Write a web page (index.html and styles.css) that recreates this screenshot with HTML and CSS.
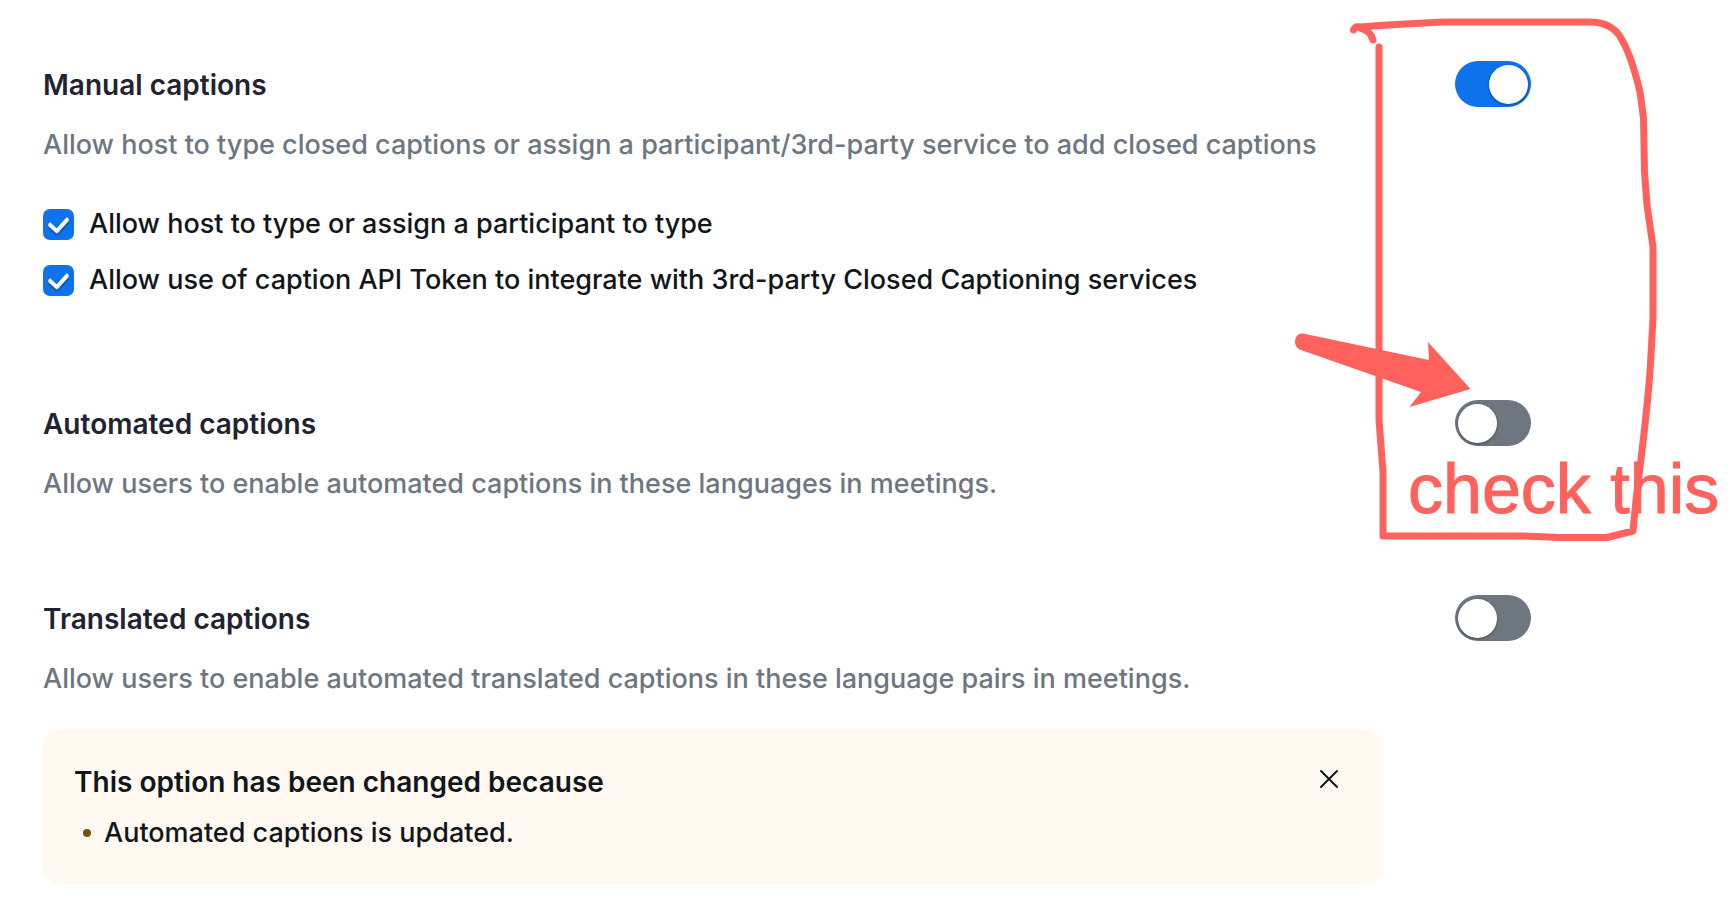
FILE: index.html
```html
<!DOCTYPE html>
<html lang="en">
<head>
<meta charset="utf-8">
<meta name="viewport" content="width=device-width, initial-scale=1">
<title>Caption settings</title>
<link rel="stylesheet" href="styles.css">
</head>
<body>
<main class="settings">
  <section class="setting">
    <div class="setting-body">
      <h2 class="setting-title" id="manual">Manual captions</h2>
      <p class="setting-desc">Allow host to type closed captions or assign a participant/3rd-party service to add closed captions</p>
      <div class="options">
        <label class="option"><input class="checkbox" type="checkbox" checked>Allow host to type or assign a participant to type</label>
        <label class="option"><input class="checkbox" type="checkbox" checked>Allow use of caption API Token to integrate with 3rd-party Closed Captioning services</label>
      </div>
    </div>
    <input class="toggle" type="checkbox" role="switch" aria-labelledby="manual" checked>
  </section>

  <section class="setting">
    <div class="setting-body">
      <h2 class="setting-title" id="automated">Automated captions</h2>
      <p class="setting-desc">Allow users to enable automated captions in these languages in meetings.</p>
    </div>
    <input class="toggle" type="checkbox" role="switch" aria-labelledby="automated">
  </section>

  <section class="setting">
    <div class="setting-body">
      <h2 class="setting-title" id="translated">Translated captions</h2>
      <p class="setting-desc">Allow users to enable automated translated captions in these language pairs in meetings.</p>
      <div class="notice">
        <div class="notice-text">
          <h3 class="notice-title">This option has been changed because</h3>
          <ul class="notice-list">
            <li class="notice-item">Automated captions is updated.</li>
          </ul>
        </div>
        <button class="notice-close" type="button" aria-label="Close">
          <svg class="close-icon" viewBox="0 0 20 20" aria-hidden="true"><path d="M2 2 18 18M18 2 2 18"/></svg>
        </button>
      </div>
    </div>
    <input class="toggle" type="checkbox" role="switch" aria-labelledby="translated">
  </section>

  <svg class="markup" viewBox="1280 0 448 560">
    <path class="markup-line" d="M1353.500 30Q1355 26 1360 27L1387 25L1443 22H1590C1603 22 1613 27 1619 35C1630 51 1636 75 1640 92L1643.500 118L1644.500 172L1647 205L1653 247V318L1651 355C1649 400 1642 450 1636 500L1633 531L1607 537.500H1560L1524 536H1383V472L1379 420V47"/>
    <path class="markup-line" d="M1360 28Q1370 30 1373 40"/>
    <path class="markup-arrow" d="M1303 333.500L1429 360L1428 342L1470.500 389L1409.500 407L1421 392L1301 350C1291 346 1295 332 1303 333.500Z"/>
    <text class="markup-text" x="1408" y="513">check this</text>
  </svg>
</main>
</body>
</html>
```
FILE: styles.css
```css
* {
  box-sizing: border-box;
}

body {
  margin: 0;
  background: #fff;
  color: #131619;
  font-family: Inter, "Liberation Sans", sans-serif;
  font-size: 27px;
  font-weight: 500;
  line-height: 40px;
}

h2, h3, p, ul {
  margin: 0;
  padding: 0;
}

.settings {
  position: relative;
  display: flex;
  flex-direction: column;
  gap: 91px;
  padding: 61px 197px 13px 43px;
}

.setting {
  display: flex;
  align-items: flex-start;
  gap: 73px;
}

.setting:first-child {
  margin-bottom: 9px;
}

.setting-body {
  flex: 1;
  min-width: 0;
}

.setting-title {
  color: #222230;
  font-size: 28px;
  font-weight: 600;
  line-height: 48px;
}

.setting-desc {
  margin-top: 16px;
  color: #6e7680;
}

.options {
  display: flex;
  flex-direction: column;
  gap: 16px;
  margin-top: 39px;
}

.option {
  display: flex;
  align-items: center;
  gap: 15px;
}

.checkbox {
  appearance: none;
  flex: none;
  display: grid;
  place-items: center;
  width: 31px;
  height: 31px;
  margin: 0;
  border-radius: 7px;
  background: #0e72ed;
}

.checkbox:checked::before {
  content: "";
  width: 9px;
  height: 15px;
  margin-bottom: 4px;
  border: solid #fff;
  border-width: 0 4px 4px 0;
  border-radius: 2px;
  filter: drop-shadow(1px 1px 1px rgba(0, 0, 0, 0.4));
  transform: rotate(42deg);
}

.toggle {
  appearance: none;
  flex: none;
  display: flex;
  align-items: center;
  width: 76px;
  height: 46px;
  margin: 0;
  padding: 3px;
  border-radius: 23px;
  background: #6e7680;
}

.toggle::before {
  content: "";
  width: 39px;
  height: 39px;
  border-radius: 50%;
  background: #fff;
  box-shadow: 0 1px 3px rgba(0, 0, 0, 0.4);
}

.toggle:checked {
  justify-content: flex-end;
  background: #0e72ed;
}

.notice {
  display: flex;
  align-items: flex-start;
  justify-content: space-between;
  margin-top: 30px;
  padding: 33px 37px 31px 31px;
  border-radius: 16px;
  background: #fff9f1;
}

.notice-title {
  font-size: 28px;
  font-weight: 600;
}

.notice-list {
  margin-top: 11px;
  list-style: none;
}

.notice-item {
  display: flex;
  align-items: center;
  gap: 13px;
  padding-left: 9px;
}

.notice-item::before {
  content: "";
  width: 8px;
  height: 8px;
  border-radius: 50%;
  background: #7d4f0e;
}

.notice-close {
  display: grid;
  place-items: center;
  width: 32px;
  height: 34px;
  padding: 0;
  border: 0;
  background: none;
}

.close-icon {
  width: 20px;
  height: 20px;
  fill: none;
  stroke: #131619;
  stroke-width: 2;
  stroke-linecap: round;
}

.markup {
  position: absolute;
  top: 0;
  right: 0;
  width: 448px;
  height: 560px;
  overflow: visible;
  pointer-events: none;
}

.markup-line {
  fill: none;
  stroke: #ff625c;
  stroke-width: 7;
  stroke-linecap: round;
  stroke-linejoin: round;
}

.markup-arrow {
  fill: #ff625c;
}

.markup-text {
  fill: #ff625c;
  stroke: #ff625c;
  stroke-width: 1;
  font-family: "Liberation Sans", Arial, sans-serif;
  font-size: 70px;
  font-weight: 400;
}
```
